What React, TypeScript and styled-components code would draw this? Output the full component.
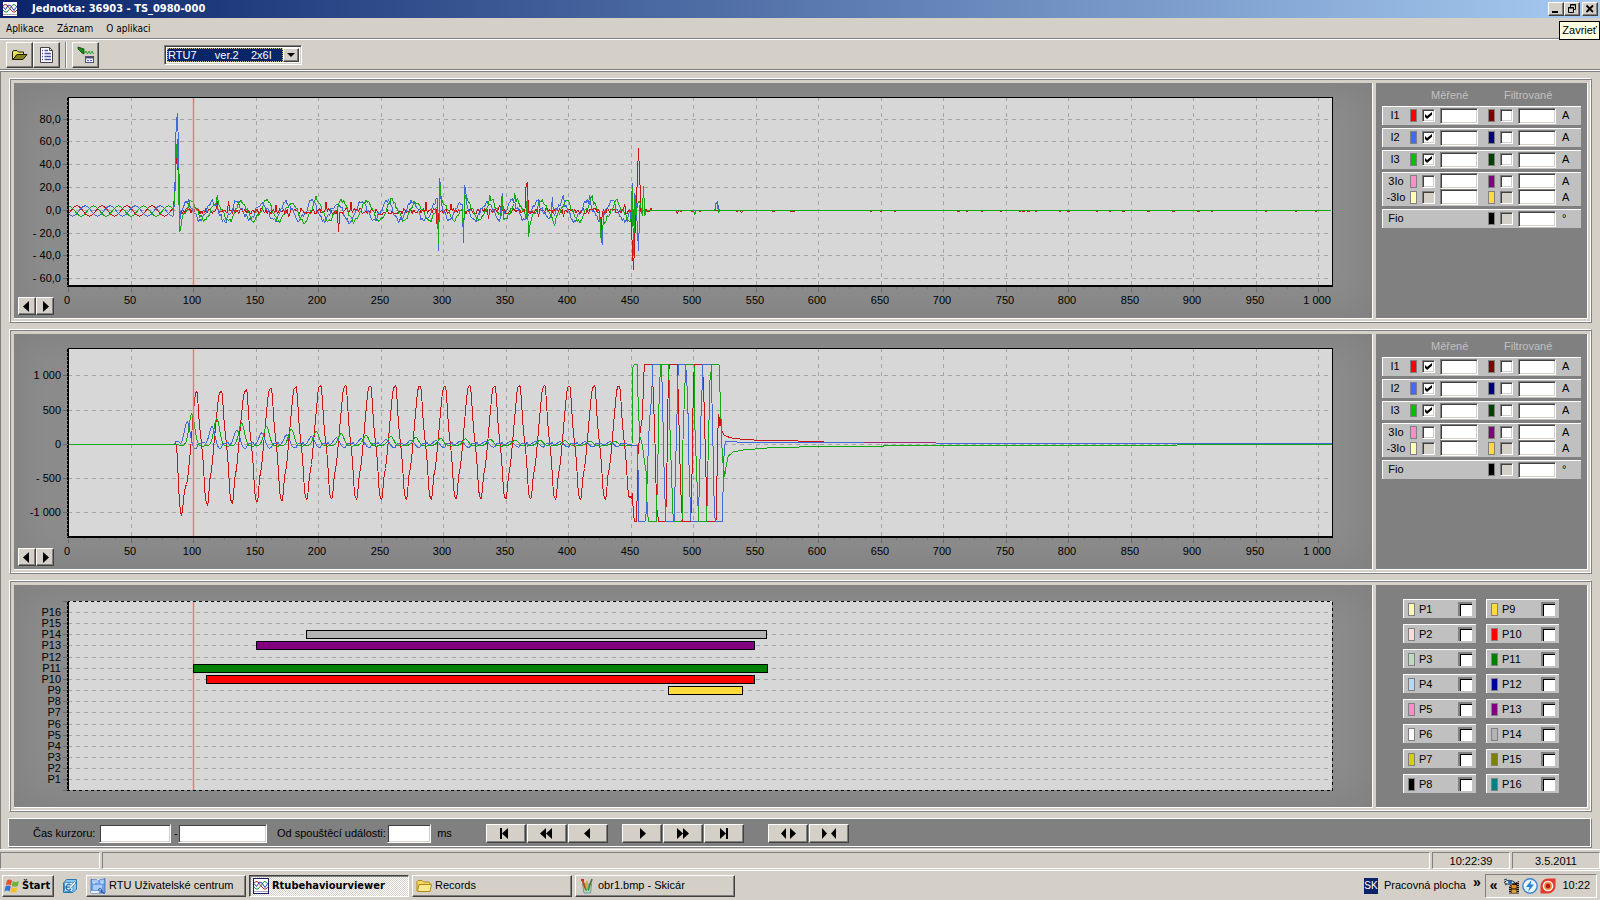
import React from 'react';
import styled, { createGlobalStyle, css } from 'styled-components';

const face = '#d4d0c8';
const shade = '#808080';
const dark = '#404040';
const uiFont = '"Liberation Sans", Arial, sans-serif';
const boldFont = '"DejaVu Sans Condensed", "DejaVu Sans", sans-serif';

const Global = createGlobalStyle`
  * { box-sizing: border-box; }
  body { margin: 0; background: ${face}; }
  button, input, select { font: inherit; color: inherit; margin: 0; padding: 0; border-radius: 0; }
`;

const raised = css`
  background: ${face};
  border: 1px solid;
  border-color: #fff ${dark} ${dark} #fff;
  box-shadow: inset -1px -1px 0 ${shade};
`;

const sunken = css`
  background: #fff;
  border: 1px solid;
  border-color: ${shade} #fff #fff ${shade};
  box-shadow: inset 1px 1px 0 ${dark}, inset -1px -1px 0 ${face};
`;

const Screen = styled.div`
  display: flex;
  flex-direction: column;
  min-height: 100vh;
  background: ${face};
  color: #000;
  font: 11px/13px ${uiFont};
  position: relative;
`;

/* ---------- window frame ---------- */

const TitleBar = styled.header`
  display: flex;
  align-items: center;
  height: 18px;
  padding: 0 2px;
  background: linear-gradient(to right, #0a246a, #a6caf0);
`;

const Title = styled.h1`
  flex: 1;
  margin: 0 0 0 14px;
  font: bold 11px/16px ${boldFont};
  color: #fff;
`;

const WindowButton = styled.button<{ $gap?: boolean }>`
  ${raised}
  display: flex;
  width: 16px;
  height: 14px;
  margin-left: ${p => (p.$gap ? 2 : 0)}px;
`;

const Tooltip = styled.div`
  position: absolute;
  top: 21px;
  right: 0;
  z-index: 2;
  padding: 1px 2px;
  border: 1px solid #000;
  background: #ffffe1;
  line-height: 15px;
`;

const MenuBar = styled.nav`
  display: flex;
  align-items: center;
  gap: 13px;
  height: 21px;
  padding-left: 6px;
  border-bottom: 1px solid ${shade};
`;

const MenuItem = styled.button`
  border: 0;
  background: none;
  font: 10px/13px ${boldFont};
`;

const Toolbar = styled.div`
  display: flex;
  align-items: center;
  height: 31px;
  margin-bottom: 1px;
  padding-left: 6px;
  border-top: 1px solid #fff;
  border-bottom: 1px solid ${shade};
`;

const ToolButton = styled.button`
  ${raised}
  display: flex;
  align-items: center;
  justify-content: center;
  width: 27px;
  height: 26px;
`;

const ToolSeparator = styled.span`
  width: 2px;
  height: 26px;
  margin: 0 5px;
  background: ${shade};
  border-right: 1px solid #fff;
`;

const Combo = styled.div`
  ${sunken}
  display: flex;
  width: 138px;
  height: 20px;
  margin-left: 65px;
  padding: 2px;
`;

const ComboField = styled.select`
  appearance: none;
  flex: 1;
  min-width: 0;
  border: 1px dotted #c9b98a;
  background: #0a246a;
  color: #fff;
  outline: 0;
`;

const ComboArrow = styled.span`
  ${raised}
  display: flex;
  width: 16px;
`;

/* ---------- recorder panels ---------- */

const Main = styled.main`
  display: flex;
  flex-direction: column;
  gap: 6px;
  padding: 6px 8px 1px;
  border-top: 1px solid ${shade};
  border-left: 1px solid ${shade};
  box-shadow: 0 -1px 0 #fff;
`;

const Panel = styled.section`
  display: flex;
  gap: 3px;
  padding: 4px 3px 3px 4px;
  border: 1px solid;
  border-color: #fff ${shade} ${shade} #fff;
  box-shadow: inset 1px 1px 0 ${shade}, inset -1px -1px 0 #fff;
`;

const ChartCell = styled.div`
  position: relative;
  flex: 1;
  min-width: 0;
  background: #8c8c8c;
  border: solid #fff;
  border-width: 0 1px 1px 0;
  box-shadow: inset 0 0 36px 8px #808080;
`;

const ChartSvg = styled.svg`
  display: block;
  width: 100%;
  font: 11px ${uiFont};
`;

const ScrollButtons = styled.div`
  position: absolute;
  left: 4px;
  bottom: 3px;
  display: flex;
`;

const ScrollButton = styled.button`
  ${raised}
  display: flex;
  align-items: center;
  justify-content: center;
  width: 18px;
  height: 18px;
`;

const SideCell = styled.aside`
  flex: 0 0 212px;
  display: flex;
  flex-direction: column;
  gap: 3px;
  padding: 6px 6px 0;
  background: ${shade};
  border: solid #fff;
  border-width: 0 1px 1px 0;
`;

const SideHeader = styled.div`
  display: grid;
  grid-template-columns: 73px 1fr;
  padding-left: 49px;
  margin-bottom: 1px;
  color: #c0c0c0;
`;

const ChannelBox = styled.div`
  display: flex;
  flex-direction: column;
  justify-content: center;
  min-height: 19px;
  padding-bottom: 1px;
  border: solid #fff;
  border-width: 1px 0 0 1px;
  background: #c0c0c0;
`;

const ChannelRow = styled.div`
  display: grid;
  grid-template-columns: 27px 78px 74px 1fr;
  align-items: center;
  height: 16px;
`;

const ChannelName = styled.label<{ $wide?: boolean }>`
  text-align: center;
  padding: ${p => (p.$wide ? '0 1px 0 0' : '0 3px 0 0')};
  white-space: nowrap;
`;

const ChannelGroup = styled.div`
  display: flex;
  align-items: center;
  gap: 5px;
`;

const Swatch = styled.span<{ $color: string }>`
  flex: none;
  width: 7px;
  height: 13px;
  border: 1px solid ${shade};
  background: ${p => p.$color};
`;

const TickBox = styled.input`
  ${sunken}
  appearance: none;
  position: relative;
  flex: none;
  width: 13px;
  height: 13px;
  &:disabled { background: ${face}; }
  &:checked::before {
    content: '';
    position: absolute;
    left: 2px;
    top: 2px;
    width: 7px;
    height: 7px;
    background: #000;
    clip-path: polygon(0 29%, 29% 58%, 100% 0, 100% 40%, 29% 100%, 0 70%);
  }
`;

const ValueBox = styled.input<{ $width: number; $height: number }>`
  ${sunken}
  width: ${p => p.$width}px;
  height: ${p => p.$height}px;
  padding: 0 3px;
`;

const FlagGrid = styled.div`
  display: grid;
  grid-template-columns: repeat(2, 73px);
  grid-template-rows: repeat(8, 19px);
  grid-auto-flow: column;
  gap: 6px 10px;
  padding: 8px 0 0 21px;
`;

const Flag = styled.label`
  display: flex;
  align-items: center;
  padding: 0 4px;
  border: solid #fff;
  border-width: 1px 0 0 1px;
  background: #c0c0c0;
`;

const FlagName = styled.span`
  flex: 1;
  padding-left: 4px;
`;

const FlagBox = styled.input`
  appearance: none;
  width: 14px;
  height: 14px;
  background: #fff;
  border: solid ${shade};
  border-width: 2px 0 0 2px;
  box-shadow: inset 1px 1px 0 #000;
`;

/* ---------- cursor bar and status bar ---------- */

const CursorBar = styled.section`
  display: flex;
  align-items: center;
  height: 30px;
  margin: 0 0 0 -1px;
  padding-left: 24px;
  border: 1px solid;
  border-color: #fff ${shade} ${shade} #fff;
  background: ${shade};
  box-shadow: inset -1px -1px 0 #fff;
`;

const CursorLabel = styled.label<{ $width: number }>`
  width: ${p => p.$width}px;
  white-space: nowrap;
`;

const ButtonGroup = styled.div<{ $gap: number }>`
  display: flex;
  gap: 1px;
  margin-left: ${p => p.$gap}px;
`;

const StepButton = styled.button`
  ${raised}
  display: flex;
  align-items: center;
  justify-content: center;
  width: 40px;
  height: 19px;
`;

const StatusBar = styled.footer`
  display: flex;
  gap: 2px;
  padding-top: 2px;
  border-top: 1px solid #fff;
`;

const StatusCell = styled.div<{ $width?: number }>`
  flex: ${p => (p.$width ? `0 0 ${p.$width}px` : '1')};
  height: 17px;
  border: 1px solid;
  border-color: ${shade} #fff #fff ${shade};
  text-align: center;
  line-height: 17px;
`;

/* ---------- taskbar ---------- */

const TaskBar = styled.div`
  display: flex;
  align-items: center;
  flex: 1;
  min-height: 28px;
  margin-top: 1px;
  padding: 0 3px 0 2px;
  border-top: 1px solid #fff;
`;

const StartButton = styled.button`
  ${raised}
  display: flex;
  align-items: center;
  gap: 2px;
  width: 52px;
  height: 22px;
  padding-left: 1px;
  font: bold 11px/16px ${boldFont};
`;

const QuickLaunch = styled.button`
  display: flex;
  margin: 0 8px;
  border: 0;
  background: none;
`;

const TaskList = styled.div`
  flex: 1;
  display: flex;
  gap: 3px;
`;

const TaskButton = styled.button<{ $active?: boolean }>`
  ${raised}
  display: flex;
  align-items: center;
  gap: 3px;
  flex: 0 1 160px;
  min-width: 0;
  height: 22px;
  padding: 0 3px;
  white-space: nowrap;
  ${p => p.$active && css`
    border-color: ${dark} #fff #fff ${dark};
    box-shadow: inset 1px 1px 0 ${shade};
    background: repeating-conic-gradient(#fff 0 25%, ${face} 0 50%) 0 0 / 2px 2px;
    font: bold 11px/16px ${boldFont};
    padding-top: 1px;
  `}
`;

const LangBadge = styled.span`
  width: 14px;
  height: 16px;
  margin-right: 6px;
  background: #0a246a;
  color: #fff;
  font-size: 10px;
  line-height: 16px;
  text-align: center;
`;

const Chevron = styled.span<{ $raise?: boolean }>`
  font: bold 14px/14px ${uiFont};
  margin: ${p => (p.$raise ? '0 4px 8px 7px' : '0 5px 2px 0')};
`;

const Tray = styled.div`
  display: flex;
  align-items: center;
  gap: 2px;
  height: 24px;
  padding: 0 6px 0 4px;
  border: 1px solid;
  border-color: ${shade} #fff #fff ${shade};
`;

const Clock = styled.time`
  margin-left: 4px;
`;

/* ---------- icons ---------- */

const WavesIcon = () => (
  <svg width="16" height="16" viewBox="0 0 16 16" aria-hidden="true" style={{ flex: 'none' }}>
    <rect x="0.5" y="0.5" width="15" height="15" fill="#fff" stroke="#1a1a6e" />
    <g fill="none" strokeWidth="1">
      <path d="M1 5 L3 3.500 L5 4 L8 8 L11 11 L13 11 L15 9" stroke="#c02030" />
      <path d="M1 9 L3 11 L5 11 L8 7.500 L11 3.500 L13 4 L15 6" stroke="#20903c" />
      <path d="M1 5.500 L3.500 8.500 L6.500 4 L9 5 L12 9.500 L15 5" stroke="#2a35c8" />
    </g>
    <path d="M1 13.500 H15" stroke="#a8a8b8" />
  </svg>
);

const OpenIcon = () => (
  <svg width="18" height="16" viewBox="0 0 18 16" aria-hidden="true">
    <path d="M1.500 12.500 V4.500 L3 3.500 H6 L7.500 5 H12.500 V7.500 H6 L2 12.500 Z" fill="#e8e060" stroke="#202000" />
    <path d="M2 12.500 L6 7.500 H16 L12 12.500 Z" fill="#8a8420" stroke="#202000" />
  </svg>
);

const DocIcon = () => (
  <svg width="18" height="18" viewBox="0 0 18 18" aria-hidden="true">
    <path d="M2.500 1.500 H11.500 L14.500 4.500 V16.500 H2.500 Z" fill="#fff" stroke="#404048" />
    <path d="M11.500 1.500 V4.500 H14.500" fill="none" stroke="#404048" />
    <path d="M4 4.500 H5 M4 7.500 H5 M4 10.500 H5 M4 13.500 H5 M6.500 4.500 H10 M6.500 7.500 H13 M6.500 10.500 H13 M6.500 13.500 H13" stroke="#5050a8" strokeWidth="1.400" />
  </svg>
);

const TransferIcon = () => (
  <svg width="18" height="18" viewBox="0 0 18 18" aria-hidden="true">
    <path d="M1 1 L7 3 V8 L5 7 L1 3 Z" fill="#169016" stroke="#064806" strokeWidth="0.8" />
    <path d="M8 7 l1 -2 l1.500 3 l1.500 -3 l1.500 3 l1.500 -3 l1.500 3" fill="none" stroke="#28a428" />
    <rect x="8.500" y="10.500" width="8" height="6" fill="#f0f0ff" stroke="#505068" />
    <path d="M9 11.500 H16" stroke="#505068" strokeWidth="2" />
    <path d="M10 14.500 H12 M13 14.500 H15" stroke="#4060d0" />
  </svg>
);

const FlagIcon = () => (
  <svg width="16" height="16" viewBox="0 0 16 16" aria-hidden="true" style={{ flex: 'none' }}>
    <path d="M3 2.500 Q5.500 0.500 8 2.500 L7 7.500 Q4.500 5.500 1.800 7.500 Z" fill="#e0542c" />
    <path d="M8.800 3 Q11.500 5 15 3 L13.800 8 Q11 9.500 7.800 8 Z" fill="#6cb33a" />
    <path d="M1.500 8.500 Q4.500 6.500 6.800 8.500 L5.500 13.500 Q3 11.500 0.500 13.500 Z" fill="#3a6fd0" />
    <path d="M7.600 9 Q10.500 11 13.500 9 L12.300 14 Q9.500 15.500 6.400 14 Z" fill="#f4bf28" />
  </svg>
);

const DesktopIcon = () => (
  <svg width="16" height="16" viewBox="0 0 16 16" aria-hidden="true">
    <path d="M1.500 5 L4.500 1.500 H14.500 V11 L11 14.500 H1.500 Z" fill="#8cc8ee" stroke="#2878b8" />
    <rect x="2.500" y="4.500" width="8.500" height="9" rx="1.500" fill="#f2faff" stroke="#3c8cc8" />
    <path d="M8.500 7 A2.800 2.800 0 1 0 9 11 M4.500 9.200 H8" fill="none" stroke="#1c6cb4" strokeWidth="1.300" />
    <path d="M7 9.500 L12.500 3.500 L14 5 L8.500 10.500 Z" fill="#fff" stroke="#3c7ca8" strokeWidth="0.8" />
  </svg>
);

const UnitIcon = () => (
  <svg width="16" height="16" viewBox="0 0 16 16" aria-hidden="true" style={{ flex: 'none' }}>
    <path d="M1 1.500 H12 L15 0.500 V15 H1 Z" fill="#6ca0e8" stroke="#3c6cc0" strokeWidth="0.8" />
    <path d="M3 1.500 V5 H5 V1.500 M7 5 V1.500 H9.500 M11 1.500 V5 H13 V1.500" fill="none" stroke="#e4f0ff" />
    <rect x="3" y="7" width="9" height="5" fill="#a8ccf8" />
    <rect x="1" y="13" width="8" height="2" fill="#e8f0ff" />
    <path d="M8.500 12.500 a1.600 1.600 0 1 1 2.500 1 l3.500 2" fill="none" stroke="#203c80" />
  </svg>
);

const FolderIcon = () => (
  <svg width="16" height="16" viewBox="0 0 16 16" aria-hidden="true" style={{ flex: 'none' }}>
    <path d="M1 13 V3.500 L2 2.500 H6 L7.500 4 H13 L14 5 V7" fill="#f6d860" stroke="#b08a18" />
    <path d="M1.500 13.500 L3 6.500 H15.500 L14 13.500 Z" fill="#fce98c" stroke="#b08a18" />
  </svg>
);

const PaintIcon = () => (
  <svg width="16" height="16" viewBox="0 0 16 16" aria-hidden="true" style={{ flex: 'none' }}>
    <path d="M3.500 6 H12.500 L11.500 15 H5 Z" fill="#b8d8c8" stroke="#688880" strokeWidth="0.8" />
    <path d="M3 1 L7 12" stroke="#b04818" strokeWidth="2" />
    <path d="M13 1 L9 12" stroke="#587038" strokeWidth="1.800" />
    <path d="M8 3 V12" stroke="#d8a030" strokeWidth="1.400" />
    <path d="M2 2 H5" stroke="#d03018" strokeWidth="2" />
    <path d="M6 9 L7.500 13 M10 7 L9.500 13" stroke="#3c9c50" strokeWidth="1.200" />
  </svg>
);

const MediaIcon = () => (
  <svg width="16" height="16" viewBox="0 0 16 16" aria-hidden="true">
    <path d="M0 4.500 Q5 0 11 4.500 Q5 8 0 4.500" fill="#e8f0f8" stroke="#203048" />
    <circle cx="6" cy="4" r="2" fill="#2860a0" />
    <path d="M1 7 L3 6 M0 2 L3 1" stroke="#203048" />
    <path d="M5 8 L15 3 V15.500 H5 Z" fill="#181008" />
    <rect x="7.500" y="7" width="5" height="3.400" fill="#e09020" />
    <rect x="7.500" y="11.500" width="5" height="3.400" fill="#e0a040" />
    <path d="M6 8 V15 M14 4 V15" stroke="#fff" strokeDasharray="1 1" />
  </svg>
);

const BoltIcon = () => (
  <svg width="16" height="16" viewBox="0 0 16 16" aria-hidden="true">
    <circle cx="8" cy="8" r="7.200" fill="#eaf4fc" stroke="#3c84c8" strokeWidth="1.400" />
    <path d="M9.500 2 L4 9 H7.500 L6 14 L12 6.500 H8.500 Z" fill="#2880d8" />
  </svg>
);

const TargetIcon = () => (
  <svg width="16" height="16" viewBox="0 0 16 16" aria-hidden="true">
    <path d="M8 0.500 H15.500 V8 A7.500 7.500 0 0 1 8 15.500 H0.500 V8 A7.500 7.500 0 0 1 8 0.500" fill="#e23c30" />
    <circle cx="8" cy="8" r="5.300" fill="#fff" />
    <circle cx="8" cy="8" r="3.900" fill="#f08038" />
    <circle cx="8" cy="8" r="2.200" fill="#b01818" />
  </svg>
);

/* Solid arrow glyphs used on the step and scroll buttons. */
const glyphs: Record<string, string> = {
  first: 'M3 1 H5 V12 H3 Z M11 1 V12 L5 6.500 Z',
  rewind: 'M8 1 V12 L2 6.500 Z M14 1 V12 L8 6.500 Z',
  back: 'M11 1 V12 L5 6.500 Z',
  play: 'M7 1 V12 L13 6.500 Z',
  forward: 'M3 1 V12 L9 6.500 Z M9 1 V12 L15 6.500 Z',
  last: 'M5 1 V12 L11 6.500 Z M11 1 H13 V12 H11 Z',
  widen: 'M7 1 V12 L2 6.500 Z M11 1 V12 L17 6.500 Z',
  narrow: 'M2 1 V12 L7 6.500 Z M16 1 V12 L11 6.500 Z',
};

const Glyph = ({ name }: { name: string }) => (
  <svg width="18" height="13" viewBox="0 0 18 13" aria-hidden="true" style={{ flex: 'none' }}>
    <path d={glyphs[name]} />
  </svg>
);

/* ---------- traces ---------- */

type Point = [number, number];

const LEFT = 54;
const RIGHT = 1318;
const msToX = (ms: number) => LEFT + 0.5 + ms * 1.25;
const toPath = (points: Point[]) =>
  'M' + points.map(([x, y]) => `${x.toFixed(1)} ${y.toFixed(1)}`).join('L');

const noise = (n: number) => {
  const s = Math.sin(n * 127.1 + 3.7) * 43758.5453;
  return (s - Math.floor(s)) * 2 - 1;
};

/* Piecewise-linear reading of a table at a position. */
const lerp = (table: Point[], at: number) => {
  for (let i = 1; i < table.length; i++) {
    if (at <= table[i][0]) {
      const [x0, y0] = table[i - 1];
      const [x1, y1] = table[i];
      return y0 + ((y1 - y0) * (at - x0)) / (x1 - x0);
    }
  }
  return table[table.length - 1][1];
};

interface PhaseSpec {
  color: string;
  peak: number;
  faultPeak: number;
  amp: number;
  jitter: number;
  seed: number;
  spikes: Point[];
}

const feeder: PhaseSpec[] = [
  {
    color: '#cc1414', peak: 6.7, faultPeak: 0, amp: 0, jitter: 2.8, seed: 11,
    spikes: [[85, 16], [86, 40], [87, 58], [88, 20], [89, -3], [119, 8], [128, 8], [166, 4], [176, -6], [206, 7], [216, -19], [226, 7],
      [286, 7], [295, -16], [306, 5], [316, -12], [336, -8], [345, 4], [366, 20], [367, 25], [376, -6], [396, -6], [426, -18], [445, 5],
      [450, -6], [451, -32], [452, -53], [453, -25], [454, 0], [455, 26], [456, 54], [457, 27], [458, -2], [466, 2], [487, -3]],
  },
  {
    color: '#4169d8', peak: 13.3, faultPeak: 114.7, amp: 8, jitter: 2.8, seed: 47,
    spikes: [[85, 15], [86, 68], [87, 85], [88, 58], [89, -9], [296, -36], [297, 28], [298, 10], [316, -29], [317, 22], [318, 14], [346, 3],
      [347, 15], [387, 11], [396, 13], [417, 13], [426, -20], [427, -31], [450, -8], [451, 24], [452, -14], [453, 15], [454, 6], [455, -14],
      [456, -36], [457, 4], [458, 2], [518, 5], [519, 8], [520, 2]],
  },
  {
    color: '#14a814', peak: 0, faultPeak: 118.5, amp: 8.500, jitter: 2.4, seed: 83,
    spikes: [[85, 10], [86, 45], [87, 62], [88, 20], [89, -19], [90, -14], [119, 13], [198, 12], [296, -30], [297, 24], [298, 12], [316, -20], [317, 14],
      [337, 13], [347, 12], [357, 15], [367, 12], [368, -24], [369, -14], [389, -14], [419, 13], [426, -25], [427, -16], [450, -8], [451, 20],
      [452, -40], [453, 10], [454, -4], [456, 8], [459, -5], [460, 21], [461, -5], [462, -2], [501, -4], [518, 6], [519, 5], [520, -2]],
  },
];

const feederTrace = (spec: PhaseSpec): string => {
  const points: Point[] = [];
  for (let ms = 0; ms <= 1010; ms++) {
    const spike = spec.spikes.find(s => s[0] === ms);
    let value: number;
    if (spike) value = spike[1];
    else if (ms < 85) value = -0.9 + 4.500 * Math.cos((2 * Math.PI * (ms - spec.peak)) / 20);
    else if (ms < 463) {
      const angle = (2 * Math.PI * (ms - spec.faultPeak)) / 20;
      value = -1 + spec.amp * (Math.cos(angle) + 0.08 * Math.cos(3 * angle)) + spec.jitter * noise(ms + spec.seed);
      if (ms > 457) value *= 0.2;
    } else value = spec.color === '#cc1414' && Math.abs(noise(ms + spec.seed)) > 0.95 ? -1.800 : -0.6;
    points.push([msToX(ms), 127 - value * 1.138]);
  }
  return toPath(points);
};

/* One period of the faulted phase, offsets in ms from the crest. */
const faultCycle: Point[] = [
  [0, 1], [1, 0.95], [1.8, 0.6], [3.2, 0.2], [4.500, -0.02], [5.9, -0.38], [7.2, -0.92], [8.3, -0.96], [9, -1.02], [9.8, -0.94],
  [10.7, -0.6], [12.500, -0.4], [14.1, -0.02], [16.2, 0.5], [18.2, 0.95], [19.2, 0.97], [20, 1],
];

const faultOnset: Point[] = [[85, 0], [86, 60], [87, -120], [88.2, -700], [89, -880], [89.7, -1010], [90.300, -1050], [91, -1000], [92.5, -700],
  [93.5, -620], [95, -560], [96, -380], [98, 0], [100, 500], [101.5, 740], [102.2, 777]];

const redFault = (ms: number) => {
  if (ms < 85) return 0;
  if (ms < 102.2) return lerp(faultOnset, ms);
  const cycles = (ms - 102.2) / 19.9;
  const n = Math.floor(cycles);
  const shape = lerp(faultCycle, (cycles - n) * 20);
  const crest = Math.min(865, 777 + n * 24) + (n % 2 ? -6 : 6);
  const trough = Math.max(800, 880 - n * 18);
  return shape > 0 ? shape * crest : shape * trough;
};

const humps = (first: number, start: number, decay: number, width: number, dip: number, rest: number) => (ms: number) => {
  if (ms < 88) return ms > 85 ? rest + 20 : 0;
  const n = Math.max(0, Math.round((ms - first) / 19.9));
  const offset = ms - first - n * 19.9;
  const height = 45 + start * Math.exp(-n * decay);
  const bell = Math.exp(-Math.pow(offset / width, 2) / 2);
  const after = Math.exp(-Math.pow((offset - 6) / 2, 2) / 2);
  return bell * height - dip * (0.4 + 0.6 * Math.exp(-n * 0.15)) * after + (offset > 8 || offset < -6 ? rest : -10);
};

const blueFault = humps(94.9, 300, 0.26, 2.2, 60, 22);
const greenFault = humps(98.7, 420, 0.2, 2.2, 15, -20);

const sampled = (f: (ms: number) => number): Point[] => {
  const points: Point[] = [];
  for (let ms = 0; ms <= 449.5; ms += 0.8) points.push([msToX(ms), 110.500 - f(ms) * 0.0685]);
  return points;
};

/* Saturated section, recorded on a grid of one third of a plot unit. */
const tail = (points: Point[]): Point[] => points.map(([x, y]) => [Math.min(386 + x / 3, RIGHT), y / 3 - 4]);

const redTail = tail([[690, 500], [695, 505], [697, 490], [700, 545], [703, 574], [710, 574], [712, 460], [714, 372], [721, 300], [727, 265],
  [733, 103], [756, 103], [760, 190], [765, 340], [768, 460], [771, 540], [776, 574], [797, 574], [801, 400], [805, 150], [808, 103],
  [832, 103], [836, 250], [842, 480], [845, 525], [847, 574], [871, 574], [874, 540], [878, 330], [880, 150], [884, 103], [907, 103],
  [911, 180], [917, 400], [921, 574], [948, 574], [952, 400], [955, 253], [957, 290], [959, 262], [965, 300], [972, 315], [982, 320],
  [1000, 325], [1040, 329], [1115, 332], [1271, 334]]);

const mergedTail = tail([[1392, 338], [1607, 338]]);

const blueTail = tail([[695, 345], [705, 347], [713, 347], [716, 574], [735, 574], [739, 545], [742, 430], [748, 280], [755, 200], [758, 103],
  [783, 103], [787, 170], [791, 380], [797, 574], [822, 574], [826, 440], [830, 290], [835, 103], [857, 103], [863, 200], [868, 450],
  [873, 574], [894, 574], [898, 480], [903, 260], [909, 103], [933, 103], [938, 300], [943, 540], [946, 574], [967, 574], [970, 450],
  [973, 350], [977, 335], [1010, 335], [1012, 338], [1607, 338], [1609, 341], [2796, 341]]);

const greenTail = tail([[696, 345], [699, 110], [703, 103], [712, 103], [715, 240], [720, 320], [727, 345], [733, 390], [739, 430], [742, 550],
  [746, 574], [769, 574], [773, 420], [778, 180], [782, 103], [806, 103], [810, 300], [815, 450], [820, 574], [846, 574], [849, 330],
  [852, 240], [857, 103], [882, 103], [885, 300], [892, 480], [896, 574], [920, 574], [923, 430], [930, 150], [936, 103], [957, 103],
  [962, 240], [967, 380], [974, 440], [978, 410], [985, 378], [1000, 366], [1030, 360], [1100, 354], [1227, 350], [1450, 349],
  [1452, 346], [2330, 346], [2332, 343], [2796, 343]]);

interface TraceData { color: string; d: string }

const feederTraces: TraceData[] = feeder.map(s => ({ color: s.color, d: feederTrace(s) }));
const faultTraces: TraceData[] = [
  { color: '#cc1414', d: toPath([...sampled(redFault), ...redTail]) },
  { color: '#4169d8', d: toPath([...sampled(blueFault), ...blueTail]) },
  { color: '#14a814', d: toPath([...sampled(greenFault), ...greenTail]) },
  { color: '#a02878', d: toPath(mergedTail) },
];

/* ---------- charts ---------- */

const timeTicks = Array.from({ length: 21 }, (_, i) => i * 50);
const minorTicks = Array.from({ length: 81 }, (_, i) => i * 12.5);
const gridColor = '#a4a4a4';
const snap = (v: number) => Math.round(v) + 0.5;

/* Red time cursor: a one-pixel line with a faint glow on both sides. */
const TimeCursor = ({ top, height }: { top: number; height: number }) => (
  <g>
    <rect x={LEFT + 124} y={top} width="3" height={height} fill="#ff9090" opacity="0.3" />
    <rect x={LEFT + 125} y={top} width="1" height={height} fill="#f87070" />
  </g>
);

interface AxisMark { label: string; y: number }

const WaveChart = ({ title, marks, traces }: { title: string; marks: AxisMark[]; traces: TraceData[] }) => (
  <ChartCell>
    <ChartSvg viewBox="0 0 1358 235" height="235" role="img" aria-label={title}>
      <rect x={LEFT} y="14" width={RIGHT - LEFT} height="189" fill="#d7d7d7" />
      <g stroke={gridColor} strokeDasharray="4 4" shapeRendering="crispEdges">
        {marks.map(m => <path key={m.y} d={`M${LEFT} ${m.y + 0.5}H${RIGHT}`} />)}
        {timeTicks.slice(1).filter(t => t !== 100).map(t => <path key={t} d={`M${snap(LEFT + t * 1.25)} 14V203`} />)}
      </g>
      <g stroke="#686868" shapeRendering="crispEdges">
        {marks.map(m => <path key={m.y} d={`M49 ${m.y + 0.5}H53`} />)}
        {timeTicks.map(t => <path key={t} d={`M${snap(LEFT + t * 1.25)} 204V209`} />)}
        {minorTicks.map(t => <path key={t} d={`M${snap(LEFT + t * 1.25)} 204V206`} stroke="#787878" />)}
      </g>
      <g fill="none" strokeLinejoin="bevel" shapeRendering="crispEdges">
        {traces.map(t => <path key={t.color} d={t.d} stroke={t.color} />)}
      </g>
      <TimeCursor top={15} height={187} />
      <g fill="none" stroke="#000" shapeRendering="crispEdges">
        <path d={`M53 14.500H${RIGHT + 0.5}V203`} />
        <path d={`M53 203H${RIGHT + 1}`} strokeWidth="2" />
        <path d="M54 14V204" strokeWidth="2" />
        <path d="M53.500 14V203" stroke="#777" strokeDasharray="1 3" />
      </g>
      <g textAnchor="end">
        {marks.map(m => <text key={m.y} x="47" y={m.y + 4}>{m.label}</text>)}
      </g>
      <g textAnchor="middle">
        {timeTicks.map(t => (
          <text key={t} x={LEFT - 1 + Math.round(t * 1.25)} y="221">{t === 1000 ? '1 000' : t}</text>
        ))}
      </g>
    </ChartSvg>
    <ScrollButtons>
      <ScrollButton aria-label="Posun vlevo"><Glyph name="back" /></ScrollButton>
      <ScrollButton aria-label="Posun vpravo"><Glyph name="play" /></ScrollButton>
    </ScrollButtons>
  </ChartCell>
);

const flagRows = Array.from({ length: 16 }, (_, i) => ({ name: `P${16 - i}`, y: Math.round(27 + i * 11.15) }));

const flagSpans = [
  { row: 2, from: 292, to: 753, color: '#b4b4b4' },
  { row: 3, from: 242, to: 741, color: '#800080' },
  { row: 5, from: 179, to: 754, color: '#008000' },
  { row: 6, from: 192, to: 741, color: '#ff0000' },
  { row: 7, from: 654, to: 729, color: '#ffdc3c' },
];

const FlagChart = () => (
  <ChartCell>
    <ChartSvg viewBox="0 0 1358 222" height="222" role="img" aria-label="P1 – P16">
      <rect x={LEFT} y="16" width={RIGHT - LEFT} height="189" fill="#d7d7d7" />
      <g stroke={gridColor} strokeDasharray="4 4" shapeRendering="crispEdges">
        {flagRows.map(r => <path key={r.name} d={`M${LEFT} ${r.y + 0.5}H${RIGHT}`} />)}
      </g>
      <g stroke="#686868" shapeRendering="crispEdges">
        {flagRows.map(r => <path key={r.name} d={`M49 ${r.y + 0.5}H53`} />)}
        <path d="M49 16.500H53M49 205.500H53" />
      </g>
      <TimeCursor top={17} height={188} />
      <g stroke="#000" shapeRendering="crispEdges">
        {flagSpans.map(s => (
          <rect key={s.row} x={s.from + 0.5} y={flagRows[s.row].y - 3.500} width={s.to - s.from - 1} height="8" fill={s.color} />
        ))}
      </g>
      <g fill="none" stroke="#000" shapeRendering="crispEdges">
        <path d={`M53 16.500H${RIGHT + 0.5}V205.500`} strokeDasharray="3 3" />
        <path d={`M53 205.500H${RIGHT + 1}`} strokeDasharray="3 3" />
        <path d="M54 16V206" strokeWidth="2" />
        <path d="M53.500 16V206" stroke="#777" strokeDasharray="1 3" />
      </g>
      <g textAnchor="end">
        {flagRows.map(r => <text key={r.name} x="47" y={r.y + 4}>{r.name}</text>)}
      </g>
    </ChartSvg>
  </ChartCell>
);

/* ---------- side panels ---------- */

interface Channel {
  name: string;
  unit: string;
  measured?: string;
  filtered: string;
  on?: boolean;
  locked?: boolean;
}

const channelBoxes: Channel[][] = [
  [{ name: 'I1', unit: 'A', measured: '#ff0000', filtered: '#800000', on: true }],
  [{ name: 'I2', unit: 'A', measured: '#4169ff', filtered: '#000080', on: true }],
  [{ name: 'I3', unit: 'A', measured: '#00c000', filtered: '#004000', on: true }],
  [
    { name: '3Io', unit: 'A', measured: '#ff8cc6', filtered: '#800080' },
    { name: '-3Io', unit: 'A', measured: '#ffffb4', filtered: '#ffdc3c', locked: true },
  ],
  [{ name: 'Fio', unit: '°', filtered: '#000000', locked: true }],
];

const Channels = ({ id }: { id: string }) => (
  <SideCell>
    <SideHeader><span>Měřené</span><span>Filtrované</span></SideHeader>
    {channelBoxes.map(box => (
      <ChannelBox key={box[0].name}>
        {box.map(c => (
          <ChannelRow key={c.name}>
            <ChannelName $wide={c.name.length > 2} htmlFor={`${id}-${c.name}`}>{c.name}</ChannelName>
            <ChannelGroup>
              {c.measured && (
                <>
                  <Swatch $color={c.measured} />
                  <TickBox type="checkbox" defaultChecked={c.on} disabled={c.locked} aria-label={`${c.name} měřené`} />
                  <ValueBox $width={38} $height={16} aria-label={`${c.name} měřená hodnota`} />
                </>
              )}
            </ChannelGroup>
            <ChannelGroup>
              <Swatch $color={c.filtered} />
              <TickBox type="checkbox" disabled={c.locked} aria-label={`${c.name} filtrované`} />
              <ValueBox id={`${id}-${c.name}`} $width={38} $height={16} />
            </ChannelGroup>
            <span>{c.unit}</span>
          </ChannelRow>
        ))}
      </ChannelBox>
    ))}
  </SideCell>
);

const flagColors = ['#ffffb4', '#ffdcdc', '#c0dcc0', '#b8d8f4', '#ff8cc6', '#ffffff', '#d2d200', '#000000',
  '#ffdc3c', '#ff0000', '#008000', '#0000a0', '#800080', '#b4b4b4', '#808000', '#008080'];

const Flags = () => (
  <SideCell>
    <FlagGrid>
      {flagColors.map((color, i) => (
        <Flag key={color}>
          <Swatch $color={color} />
          <FlagName>{`P${i + 1}`}</FlagName>
          <FlagBox type="checkbox" />
        </Flag>
      ))}
    </FlagGrid>
  </SideCell>
);

const feederMarks: AxisMark[] = [
  { label: '80,0', y: 36 }, { label: '60,0', y: 58 }, { label: '40,0', y: 81 }, { label: '20,0', y: 104 },
  { label: '0,0', y: 127 }, { label: '- 20,0', y: 150 }, { label: '- 40,0', y: 172 }, { label: '- 60,0', y: 195 },
];
const faultMarks: AxisMark[] = [
  { label: '1 000', y: 41 }, { label: '500', y: 76 }, { label: '0', y: 110 }, { label: '- 500', y: 144 }, { label: '-1 000', y: 178 },
];

const nb = '\u00a0';
const deviceName = `RTU7${nb.repeat(6)}ver.2${nb.repeat(4)}2x6I`;

const stepGroups: { gap: number; steps: [string, string][] }[] = [
  { gap: 36, steps: [['first', 'Na začátek'], ['rewind', 'Rychle zpět'], ['back', 'Zpět']] },
  { gap: 14, steps: [['play', 'Vpřed'], ['forward', 'Rychle vpřed'], ['last', 'Na konec']] },
  { gap: 24, steps: [['widen', 'Roztáhnout'], ['narrow', 'Stáhnout']] },
];

export default function App() {
  return (
    <Screen>
      <Global />
      <TitleBar>
        <WavesIcon />
        <Title>Jednotka: 36903 - TS_0980-000</Title>
        <WindowButton aria-label="Minimalizovať">
          <svg width="14" height="12" aria-hidden="true"><path d="M3 8H9V10H3Z" /></svg>
        </WindowButton>
        <WindowButton aria-label="Obnoviť">
          <svg width="14" height="12" aria-hidden="true">
            <path d="M5.500 4V1.500H10.500V6.500H9M5 2H11M3.500 4.500H8.500V9.500H3.500ZM3 5H9" fill="none" stroke="#000" />
          </svg>
        </WindowButton>
        <WindowButton $gap aria-label="Zavrieť">
          <svg width="14" height="12" aria-hidden="true">
            <path d="M3.500 2.500L10 9M10 2.500L3.500 9" stroke="#000" strokeWidth="1.800" />
          </svg>
        </WindowButton>
      </TitleBar>
      <Tooltip role="tooltip">Zavrieť</Tooltip>
      <MenuBar>
        <MenuItem>Aplikace</MenuItem>
        <MenuItem>Záznam</MenuItem>
        <MenuItem>O aplikaci</MenuItem>
      </MenuBar>
      <Toolbar>
        <ToolButton aria-label="Otevřít"><OpenIcon /></ToolButton>
        <ToolButton aria-label="Protokol"><DocIcon /></ToolButton>
        <ToolSeparator />
        <ToolButton aria-label="Načíst záznam"><TransferIcon /></ToolButton>
        <Combo>
          <ComboField aria-label="Jednotka"><option>{deviceName}</option></ComboField>
          <ComboArrow aria-hidden="true">
            <svg width="14" height="13"><path d="M3 4H11L7 8Z" /></svg>
          </ComboArrow>
        </Combo>
      </Toolbar>

      <Main>
        <Panel>
          <WaveChart title="Proudy I1, I2, I3" marks={feederMarks} traces={feederTraces} />
          <Channels id="a" />
        </Panel>
        <Panel>
          <WaveChart title="Poruchové proudy I1, I2, I3" marks={faultMarks} traces={faultTraces} />
          <Channels id="b" />
        </Panel>
        <Panel>
          <FlagChart />
          <Flags />
        </Panel>
        <CursorBar>
          <CursorLabel $width={66} htmlFor="cursor-from">Čas kurzoru:</CursorLabel>
          <ValueBox id="cursor-from" $width={72} $height={19} />
          <CursorLabel $width={7} htmlFor="cursor-to">{nb}-</CursorLabel>
          <ValueBox id="cursor-to" $width={89} $height={19} />
          <CursorLabel $width={10} />
          <CursorLabel $width={110} htmlFor="since-start">Od spouštěcí události:</CursorLabel>
          <ValueBox id="since-start" $width={44} $height={19} />
          <CursorLabel $width={19} htmlFor="since-start">{nb}{nb}ms</CursorLabel>
          {stepGroups.map(g => (
            <ButtonGroup key={g.gap} $gap={g.gap}>
              {g.steps.map(([glyph, label]) => (
                <StepButton key={glyph} aria-label={label}><Glyph name={glyph} /></StepButton>
              ))}
            </ButtonGroup>
          ))}
        </CursorBar>
      </Main>

      <StatusBar>
        <StatusCell $width={100} />
        <StatusCell />
        <StatusCell $width={78}>10:22:39</StatusCell>
        <StatusCell $width={88}>3.5.2011</StatusCell>
      </StatusBar>

      <TaskBar>
        <StartButton><FlagIcon />Štart</StartButton>
        <QuickLaunch aria-label="Zobraziť pracovnú plochu"><DesktopIcon /></QuickLaunch>
        <TaskList>
          <TaskButton><UnitIcon />RTU Uživatelské centrum</TaskButton>
          <TaskButton $active><WavesIcon />Rtubehaviourviewer</TaskButton>
          <TaskButton><FolderIcon />Records</TaskButton>
          <TaskButton><PaintIcon />obr1.bmp - Skicár</TaskButton>
        </TaskList>
        <LangBadge>SK</LangBadge>
        <span>Pracovná plocha</span>
        <Chevron $raise>»</Chevron>
        <Tray>
          <Chevron>«</Chevron>
          <MediaIcon />
          <BoltIcon />
          <TargetIcon />
          <Clock>10:22</Clock>
        </Tray>
      </TaskBar>
    </Screen>
  );
}
